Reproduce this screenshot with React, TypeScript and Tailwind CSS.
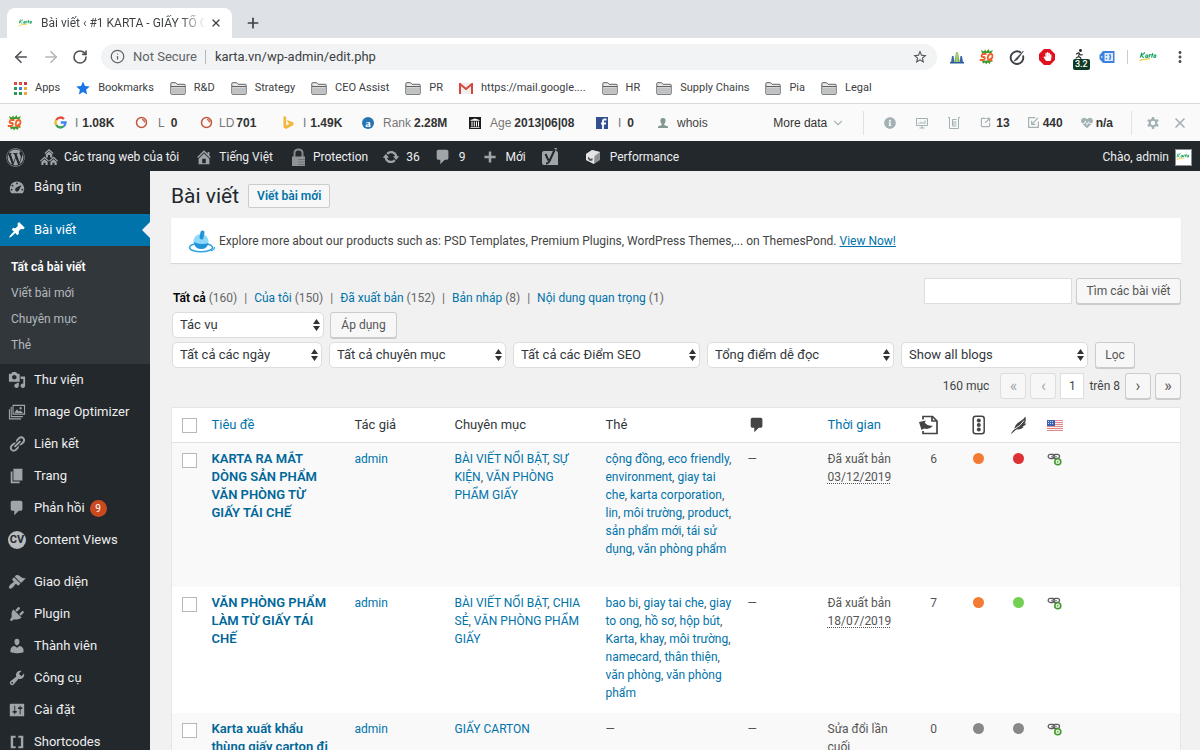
import type { ComponentProps, ReactNode } from "react";
import clsx from "clsx";
import { FaWordpress, FaInfoCircle, FaHandPaper, FaHeartbeat } from "react-icons/fa";
import { MdStarBorder, MdMoreVert } from "react-icons/md";
import {
  ArrowLeft,
  ArrowRight,
  ChevronDown,
  Info,
  Plus,
  RotateCw,
  SquareArrowOutUpRight,
  X,
} from "lucide-react";

/* 20x20 glyphs of the admin menu */
const glyphs = {
  dashboard:
    "M3.76 17h12.48c1.1-1.37 1.76-3.11 1.76-5 0-4.42-3.58-8-8-8s-8 3.58-8 8c0 1.89.66 3.63 1.76 5zM9 6a1 1 0 1 1 2 0 1 1 0 0 1-2 0zM4 8.5a1 1 0 1 1 2 0 1 1 0 0 1-2 0zM8.52 11.4c.84-.83 6.51-3.5 6.51-3.5s-2.66 5.68-3.49 6.51c-.84.84-2.18.84-3.02 0-.83-.83-.83-2.18 0-3.01zM3 13a1 1 0 1 1 2 0 1 1 0 0 1-2 0zM15 13a1 1 0 1 1 2 0 1 1 0 0 1-2 0z",
  pin: "M10.44 3.02l1.82-1.82 6.36 6.35-1.83 1.82c-1.05-.68-2.48-.57-3.41.36l-.75.75c-.92.93-1.04 2.35-.35 3.41l-1.83 1.82-2.41-2.41-2.8 2.79c-.42.42-3.38 2.71-3.8 2.29s1.86-3.39 2.28-3.81l2.79-2.79L4.1 9.36l1.83-1.82c1.05.69 2.48.57 3.4-.36l.75-.75c.93-.92 1.05-2.35.36-3.41z",
  media:
    "M13 11V4c0-.55-.45-1-1-1h-1.67L9 1H5L3.67 3H2c-.55 0-1 .45-1 1v7c0 .55.45 1 1 1h10c.55 0 1-.45 1-1zM7 4.5c1.38 0 2.5 1.12 2.5 2.5S8.38 9.5 7 9.5 4.5 8.38 4.5 7 5.62 4.5 7 4.5zM14 6h5v10.5c0 1.38-1.12 2.5-2.5 2.5S14 17.88 14 16.5s1.12-2.5 2.5-2.5c.17 0 .34.02.5.05V9h-3V6zm-4 8.05V13h2v3.5c0 1.38-1.12 2.5-2.5 2.5S7 17.88 7 16.5 8.12 14 9.5 14c.17 0 .34.02.5.05z",
  images:
    "M5 2h14v11H5zM6.2 3.2v8.6h11.6V3.2zM3 4.5h1.2v10h12.3v1.2H3zM1 7h1.2v10h12.3v1.2H1zM7 11l3-4 2 2.5 1.5-1.2L17 11zM14 4.5a1.3 1.3 0 1 1 0 2.6 1.3 1.3 0 0 1 0-2.6z",
  links:
    "M17.74 2.76c1.68 1.69 1.68 4.41 0 6.1l-1.53 1.52c-1.12 1.12-2.7 1.47-4.14 1.09l2.62-2.61.76-.77.76-.76c.84-.84.84-2.2 0-3.04-.84-.85-2.2-.85-3.04 0l-.77.76-3.38 3.38c-.37-1.44-.02-3.02 1.1-4.14l1.52-1.53c1.69-1.68 4.42-1.68 6.1 0zM8.59 13.43l5.34-5.34c.42-.42.42-1.1 0-1.52-.44-.43-1.13-.39-1.53 0l-5.33 5.34c-.42.42-.42 1.1 0 1.52.44.43 1.13.39 1.52 0zm-.76 2.29l4.14-4.15c.38 1.44.03 3.02-1.09 4.14l-1.52 1.53c-1.69 1.68-4.41 1.68-6.1 0-1.68-1.68-1.68-4.42 0-6.1l1.53-1.52c1.12-1.12 2.7-1.47 4.14-1.1l-4.14 4.15c-.85.84-.85 2.2 0 3.05.84.84 2.2.84 3.04 0z",
  page: "M6 15V2h10v13H6zm-1 1h8v2H3V5h2v11z",
  comment:
    "M5 2h9c1.1 0 2 .9 2 2v7c0 1.1-.9 2-2 2h-2l-5 5v-5H5c-1.1 0-2-.9-2-2V4c0-1.1.9-2 2-2z",
  appearance:
    "M14.48 11.06L7.41 3.99l1.5-1.5c.5-.56 2.3-.47 3.51.32 1.21.8 1.43 1.28 2.91 2.1 1.18.64 2.45 1.26 4.45.85zm-.71.71L6.7 4.7 4.93 6.47c-.39.39-.39 1.02 0 1.41l1.06 1.06c.39.39.39 1.03 0 1.42-.6.6-1.43 1.11-2.21 1.69-.35.26-.7.53-1.01.84C1.43 14.23.4 16.08 1.4 17.07c.99 1 2.84-.03 4.18-1.36.31-.31.58-.66.85-1.02.57-.78 1.08-1.61 1.69-2.21.39-.39 1.02-.39 1.41 0l1.06 1.06c.39.39 1.02.39 1.41 0z",
  plugins:
    "M13.11 4.36L9.87 7.6 8 5.73l3.24-3.24c.35-.34 1.05-.2 1.56.32.52.51.66 1.21.31 1.55zm-8 1.77l.91-1.12 9.01 9.01-1.19.84c-.71.71-2.63 1.16-3.82 1.16H6.14L4.9 17.26c-.59.59-1.54.59-2.12 0-.59-.58-.59-1.53 0-2.12l1.24-1.24v-3.88c0-1.13.4-3.19 1.09-3.89zm7.26 3.97l3.24-3.24c.34-.35 1.04-.21 1.55.31.52.51.66 1.21.31 1.55l-3.24 3.25z",
  users:
    "M10 9.25c-2.27 0-2.73-3.44-2.73-3.44C7 4.02 7.82 2 9.97 2c2.16 0 2.98 2.02 2.71 3.81 0 0-.41 3.44-2.68 3.44zm0 2.57L12.72 10c2.39 0 4.52 2.33 4.52 4.53v2.49s-3.65 1.13-7.24 1.13c-3.65 0-7.24-1.13-7.24-1.13v-2.49c0-2.25 1.94-4.48 4.47-4.48z",
  tools:
    "M16.68 9.77c-1.34 1.34-3.3 1.67-4.95.99l-5.41 6.52c-.99.99-2.59.99-3.58 0s-.99-2.59 0-3.57l6.52-5.42c-.68-1.65-.35-3.61.99-4.95 1.28-1.28 3.12-1.62 4.72-1.06l-2.89 2.89 2.82 2.82 2.86-2.87c.53 1.58.18 3.39-1.08 4.65zM3.81 16.21c.4.39 1.04.39 1.43 0 .4-.4.4-1.04 0-1.43-.39-.4-1.03-.4-1.43 0-.39.39-.39 1.03 0 1.43z",
  settings:
    "M18 16V4c0-.55-.45-1-1-1H3c-.55 0-1 .45-1 1v12c0 .55.45 1 1 1h14c.55 0 1-.45 1-1zM8 11h1c.55 0 1 .45 1 1s-.45 1-1 1H8v1.5c0 .28-.22.5-.5.5s-.5-.22-.5-.5V13H6c-.55 0-1-.45-1-1s.45-1 1-1h1V5.5c0-.28.22-.5.5-.5s.5.22.5.5V11zm5-2h-1c-.55 0-1-.45-1-1s.45-1 1-1h1V5.5c0-.28.22-.5.5-.5s.5.22.5.5V7h1c.55 0 1 .45 1 1s-.45 1-1 1h-1v5.5c0 .28-.22.5-.5.5s-.5-.22-.5-.5V9z",
  brackets: "M3 3h5.5v2.2H5.7v9.600h2.800V17H3zM17 3h-5.500v2.200h2.800v9.600h-2.800V17H17z",
  home: "M16 8.5l1.53 1.53-1.06 1.06L10 4.6l-6.47 6.49-1.06-1.06L10 2.5l4 4v-2h2v4zm-6-2.46l6 5.99V18H4v-5.97zM12 17v-5H8v5h4z",
  sites:
    "M10 1l5 4.6-.9 1L10 3 5.9 6.6l-.9-1zM10 4l3.5 3v3.5h-2.3V7.8H8.8v2.7H6.5V7zM5 9.5l5 4.6-.9 1L5 11.5.9 15.1l-.9-1zM5 12.5l3.5 3V19H6.2v-2.7H3.8V19H1.500v-3.5zM15 9.5l5 4.6-.9 1-4.1-3.6-4.1 3.6-.9-1zM15 12.5l3.5 3V19h-2.3v-2.7h-2.4V19h-2.3v-3.5z",
  update:
    "M10.2 3.28c3.53 0 6.43 2.61 6.92 6h2.08l-3.5 4-3.5-4h2.32c-.45-1.97-2.21-3.45-4.32-3.45-1.45 0-2.73.71-3.54 1.78L4.95 5.66C6.23 4.2 8.11 3.28 10.2 3.28zm-.4 13.44c-3.52 0-6.43-2.61-6.92-6H.8l3.5-4c1.17 1.33 2.33 2.67 3.5 4H5.48c.45 1.97 2.21 3.45 4.32 3.45 1.45 0 2.73-.71 3.54-1.78l1.71 1.95c-1.28 1.46-3.15 2.38-5.25 2.38z",
  plus: "M18 8.2v3.6h-6.2V18H8.2v-6.2H2V8.2h6.2V2h3.6v6.2z",
};

type GlyphName = keyof typeof glyphs;

function Glyph({ name, className }: { name: GlyphName; className?: string }) {
  return (
    <svg
      viewBox="0 0 20 20"
      fill="currentColor"
      fillRule="evenodd"
      aria-hidden="true"
      className={clsx("shrink-0", className ?? "size-[18px]")}
    >
      <path d={glyphs[name]} />
    </svg>
  );
}

function KartaLogo({ className }: { className?: string }) {
  return (
    <svg viewBox="0 0 18 14" aria-hidden="true" className={className}>
      <rect width="18" height="14" fill="#fff" />
      <path
        d="M2.500 3l-1.300 4.500M5.500 3L2.200 5.500l2 2.200M7.500 5c-1.500-.3-2 2.500-.8 2.500s1.300-2.500 1.300-2.500l-.4 2.500M9 7.500l.5-2.500 1.200-.1M12.300 3.500l-1 4M11 5h1.800M14.800 5c-1.500-.3-2 2.500-.8 2.500s1.200-2.500 1.200-2.500l-.3 2.500"
        fill="none"
        stroke="#12a05c"
        strokeWidth="1"
      />
      <path d="M.5 10.500c3-2 6.500-1.700 9.500-1.900" stroke="#ecc93c" strokeWidth="1" fill="none" />
    </svg>
  );
}

function SeoQuakeIcon() {
  return (
    <svg viewBox="0 0 16 16" aria-hidden="true" className="size-4 shrink-0">
      <path
        d="M2 1l3 1.500L6 .5l1.500 2L9.500 0l1 2.500L14 1l-1.500 3H3zM3 12l1 2.500 2-1 1 2 1.500-2L11 15l.5-2.500 2.500.5-2-2z"
        fill="#3c9a2e"
      />
      <path
        d="M7.500 5H4.300C2.500 5 2 8 3.600 8h1.200c1.800 0 1 3-.8 3H.8M11.800 5c-3 0-4.300 6-1.500 6 3.200 0 4.400-6 1.500-6zM11 9l2 3"
        fill="none"
        stroke="#f1602b"
        strokeWidth="1.800"
      />
    </svg>
  );
}

function Folder() {
  return (
    <svg viewBox="0 0 16 13" aria-hidden="true" className="h-[13px] w-4 shrink-0">
      <path
        d="M.8 11.500V1.500q0-.8.8-.8h4l1.500 1.600h7.300q.8 0 .8.800v8.400q0 .8-.8.800H1.600q-.8 0-.8-.8z"
        fill="#e9e9e9"
        stroke="#5f6163"
      />
      <path d="M2 5.500h12.300v6H2z" fill="#c0c1c2" />
      <path d="M1 4.500h14" stroke="#5f6163" />
    </svg>
  );
}

const appColors = ["#e04a3f", "#e04a3f", "#c93c3c", "#2f9a55", "#3f7de0", "#e9a93a", "#2f9a55", "#2f9a55", "#e9a93a"];

function AppsIcon() {
  return (
    <svg viewBox="0 0 13 13" aria-hidden="true" className="size-[13px] shrink-0">
      {appColors.map((c, i) => (
        <rect key={i} x={(i % 3) * 5} y={Math.floor(i / 3) * 5} width="3" height="3" fill={c} />
      ))}
    </svg>
  );
}

function GmailIcon() {
  return (
    <svg viewBox="0 0 14 11" aria-hidden="true" className="h-[11px] w-3.5 shrink-0">
      <path d="M1 0h12v11H1z" fill="#f0eeee" />
      <path d="M1 11V1l6 5 6-5v10" fill="none" stroke="#d5483d" strokeWidth="2" />
    </svg>
  );
}

const bookmarks: { label: string; icon?: ReactNode }[] = [
  { label: "Apps", icon: <AppsIcon /> },
  {
    label: "Bookmarks",
    icon: (
      <svg viewBox="0 0 24 24" aria-hidden="true" className="size-[14px] shrink-0">
        <path
          d="M12 1l3.300 7.600 8.200.8-6.200 5.500 1.800 8.100L12 18.700l-7.100 4.300 1.800-8.100L.5 9.400l8.200-.8z"
          fill="#1a73e8"
        />
      </svg>
    ),
  },
  { label: "R&D" },
  { label: "Strategy" },
  { label: "CEO Assist" },
  { label: "PR" },
  { label: "https://mail.google....", icon: <GmailIcon /> },
  { label: "HR" },
  { label: "Supply Chains" },
  { label: "Pia" },
  { label: "Legal" },
];

function BrowserChrome() {
  return (
    <header className="shrink-0 bg-[#dee1e6] text-[#3c4043]">
      <div className="flex h-[38px] items-end pl-[7px]">
        <div className="flex h-[30px] w-[225px] items-center rounded-t-lg bg-white pr-2.5 pl-[11px]">
          <KartaLogo className="h-3 w-4 shrink-0" />
          <span className="ml-[7px] min-w-0 flex-1 overflow-hidden bg-linear-to-r from-[#3c4043] from-85% to-transparent bg-clip-text text-xs whitespace-nowrap text-transparent">
            Bài viết ‹ #1 KARTA - GIẤY TỔ ONG
          </span>
          <button type="button" aria-label="Close tab" className="ml-1">
            <X className="size-3" strokeWidth={2.5} />
          </button>
        </div>
        <button type="button" aria-label="New tab" className="ml-[13px] flex h-[30px] items-center">
          <Plus className="size-4" strokeWidth={2.5} />
        </button>
      </div>

      <div className="border-b border-[#d8dadd] bg-white">
        <div className="flex h-[37px] items-center pr-[11px] pl-3">
          <button type="button" aria-label="Back">
            <ArrowLeft className="size-[18px] text-[#4d5155]" strokeWidth={2.2} />
          </button>
          <button type="button" aria-label="Forward" className="ml-3">
            <ArrowRight className="size-[18px] text-[#b4b6b9]" strokeWidth={2.2} />
          </button>
          <button type="button" aria-label="Reload" className="ml-3">
            <RotateCw className="size-4 text-[#4d5155]" strokeWidth={2.4} />
          </button>
          <div className="ml-[13px] flex h-[26px] flex-1 items-center rounded-full bg-[#f1f3f4] px-[9px] text-[13px]">
            <Info className="size-[15px] text-[#5f6368]" />
            <span className="ml-2 text-[#5f6368]">Not Secure</span>
            <span className="mr-[9px] ml-2 h-3.5 w-px bg-[#b5b8bc]" />
            <input
              aria-label="Address"
              defaultValue="karta.vn/wp-admin/edit.php"
              className="min-w-0 flex-1 bg-transparent text-[#3c4043] outline-none"
            />
            <MdStarBorder className="size-4 text-[#4d5155]" />
          </div>
          <div className="ml-3 flex items-center">
            <div className="flex items-center gap-3.5">
              <svg viewBox="0 0 16 16" aria-hidden="true" className="size-4">
                <path d="M1 13h14v1.500H1z" fill="#30589c" />
                <path d="M2 13l1-6h1.500l1 6zM10.500 13l1-6H13l1 6z" fill="#3b66ad" />
                <path d="M5.500 13L7 3h2l1.500 10z" fill="#79b63c" />
                <path d="M8 3v10" stroke="#fff" strokeWidth=".6" />
              </svg>
              <SeoQuakeIcon />
              <svg viewBox="0 0 16 16" aria-hidden="true" className="size-4" fill="none" stroke="#3e4347">
                <path d="M12 3.800A6.300 6.300 0 1 0 13.900 6.500" strokeWidth="1.900" />
                <path d="M14.500 2L7 9.500l-2 2.700 3.200-1.500z" fill="#3e4347" strokeWidth=".6" />
              </svg>
              <span className="relative flex size-4 items-center justify-center">
                <svg viewBox="0 0 16 16" aria-hidden="true" className="absolute size-4">
                  <path d="M5 0h6l5 5v6l-5 5H5l-5-5V5z" fill="#e0121f" />
                </svg>
                <FaHandPaper className="relative size-[9px] text-white" />
              </span>
            </div>
            <span className="relative ml-[18px] h-4 w-5">
              <svg viewBox="0 0 16 16" aria-hidden="true" className="size-3" fill="none" stroke="#2a2a2a" strokeWidth="1.500">
                <circle cx="10" cy="2" r="1.200" fill="#2a2a2a" />
                <path d="M4 7l3.500-2L10 8l3-.5M8.500 5l-1 5 3 2-.5 3M7.500 10l-4 2.500" />
              </svg>
              <span className="absolute top-[10px] left-0 rounded-[2px] bg-[#0d3b26] px-0.5 text-[9px] leading-[11px] font-medium text-white">
                3.2
              </span>
            </span>
            <svg viewBox="0 0 16 14" aria-hidden="true" className="ml-1.5 h-3.5 w-4">
              <path d="M4 1h11.500v12H4L.5 9V5z" fill="#3d82e0" />
              <path d="M5.500 3h8.500v8H5.500z" fill="#dfeafa" />
              <circle cx="2.800" cy="7" r=".8" fill="#fff" />
              <path d="M7.500 4.700v1.400M7.500 7.900v1.400M10.500 4.200q2 2.800 0 5.600" stroke="#3d82e0" strokeWidth="1.300" fill="none" />
            </svg>
            <span className="mr-[11px] ml-3 h-3.5 w-px bg-[#c9ccd0]" />
            <KartaLogo className="h-4 w-5" />
            <button type="button" aria-label="Menu" className="ml-3">
              <MdMoreVert className="size-[18px] text-[#4d5155]" />
            </button>
          </div>
        </div>

        <nav aria-label="Bookmarks" className="flex h-7 items-center gap-4 pb-0.5 pl-3.5 text-[11px]">
          {bookmarks.map((b) => (
            <a key={b.label} href="#" className="flex items-center gap-2 whitespace-nowrap">
              {b.icon ?? <Folder />}
              {b.label}
            </a>
          ))}
        </nav>
      </div>
    </header>
  );
}

function RingIcon() {
  return (
    <svg viewBox="0 0 13 13" aria-hidden="true" className="size-[13px] shrink-0" fill="none" stroke="#c4553c">
      <circle cx="6.500" cy="6.500" r="5" strokeWidth="1.500" />
      <path d="M7 3.500q2.500.3 2.500 3" strokeWidth="1.200" />
    </svg>
  );
}

const seoStats: { label: string; value?: string; width: string; icon: ReactNode }[] = [
  {
    label: "I",
    value: "1.08K",
    width: "w-[81px] gap-1",
    icon: (
      <svg viewBox="0 0 13 13" aria-hidden="true" className="size-[13px]" fill="none" strokeWidth="2.400">
        <path d="M2.200 4A5 5 0 0 1 10 3" stroke="#e24b3b" />
        <path d="M2.200 9A5 5 0 0 1 2.200 4" stroke="#f0b92e" />
        <path d="M10 10A5 5 0 0 1 2.200 9" stroke="#3aa35a" />
        <path d="M6.800 6.500h4.700q-.2 2.500-1.500 3.500" stroke="#4385ee" />
      </svg>
    ),
  },
  { label: "L", value: "0", width: "w-[65px] gap-1.5", icon: <RingIcon /> },
  { label: "LD", value: "701", width: "w-[82px] gap-0.5", icon: <RingIcon /> },
  {
    label: "I",
    value: "1.49K",
    width: "w-20 gap-1",
    icon: (
      <svg viewBox="0 0 13 13" aria-hidden="true" className="size-[13px]">
        <path d="M1.500 0l2.700 1v8.500l3.500-2-1.700-.8-1-2.600 6.500 2.300v2.600L4.200 13l-2.700-1.500z" fill="#f4b63f" />
      </svg>
    ),
  },
  {
    label: "Rank",
    value: "2.28M",
    width: "w-[107px] gap-[3px]",
    icon: (
      <span className="mr-0.5 flex size-3 items-center justify-center rounded-full bg-[#2674b0] font-['Liberation_Serif',serif] text-[11px] leading-3 font-bold text-white">
        a
      </span>
    ),
  },
  {
    label: "Age",
    value: "2013|06|08",
    width: "w-[127px] gap-[3px]",
    icon: (
      <svg viewBox="0 0 12 12" aria-hidden="true" className="mr-0.5 size-3">
        <path d="M0 0h12v12H0z" fill="#1c1c1c" />
        <path
          d="M1.500 3L6 1.500 10.500 3v.8h-9zM2.500 4.500h1v5h-1zM4.800 4.500h1v5h-1zM7 4.500h1v5H7zM9 4.500h1v5H9zM1.500 10h9v.8h-9z"
          fill="#fff"
        />
      </svg>
    ),
  },
  {
    label: "I",
    value: "0",
    width: "w-[61px] gap-1.5",
    icon: (
      <svg viewBox="0 0 12 12" aria-hidden="true" className="size-3">
        <path d="M0 0h12v12H0z" fill="#33508e" />
        <path d="M7 12V4q0-1.500 1.500-1.500h2M5 6.500h5" fill="none" stroke="#fff" strokeWidth="1.800" />
      </svg>
    ),
  },
  {
    label: "whois",
    width: "w-24",
    icon: (
      <svg viewBox="0 0 12 12" aria-hidden="true" className="size-3 text-[#82998f]" fill="currentColor">
        <path d="M6 1c4 0 2.500 5 1.200 6v1L11 9.500V11H1V9.500L4.800 8V7C3.500 6 2 1 6 1z" />
      </svg>
    ),
  },
];

function SeoBar() {
  return (
    <div className="flex h-[37px] shrink-0 items-center bg-[#fafafa] pr-3 pl-[7px] font-['Liberation_Sans',sans-serif] text-xs text-[#333]">
      <SeoQuakeIcon />
      <div className="ml-[31px] flex">
        {seoStats.map((s, i) => (
          <span key={i} className={clsx("flex items-center whitespace-nowrap", s.width)}>
            <span className="mr-1">{s.icon}</span>
            <span className={s.value ? "text-[#777]" : "pl-1 text-[#444]"}>{s.label}</span>
            {s.value && <b>{s.value}</b>}
          </span>
        ))}
      </div>
      <button type="button" className="ml-auto flex items-center gap-1">
        More data
        <ChevronDown className="size-3.5 text-[#a9b5b9]" />
      </button>
      <span className="ml-[18px] h-6 w-px bg-[#e2e2e2]" />
      <div className="ml-5 flex items-center gap-5 text-[#a3b1b5]">
        <FaInfoCircle className="size-3" />
        <svg viewBox="0 0 12 12" aria-hidden="true" className="size-3" fill="none" stroke="currentColor">
          <path d="M.5 1.500h11v7H.5zM6 8.500V11M3.500 11h5M3 7V5.500M5 7V4.500M7 7V5M9 7V3.500" />
        </svg>
        <svg viewBox="0 0 12 12" aria-hidden="true" className="size-3" fill="none" stroke="currentColor">
          <path d="M0 .5h1.500v11h9V.5H12M4.500 2.500h4M4.500 5h4M4.500 7h4M4.500 9h4M4.500 2.500V9" />
        </svg>
      </div>
      <div className="ml-5 flex items-center text-[#a3b1b5]">
        <SquareArrowOutUpRight className="size-[11px]" strokeWidth={2.5} />
        <b className="ml-[5px] text-[#333]">13</b>
        <svg
          viewBox="0 0 12 12"
          aria-hidden="true"
          className="ml-[18px] size-[11px]"
          fill="none"
          stroke="currentColor"
          strokeWidth="1.300"
        >
          <path d="M8 .7H.7v10.600h10.600V5M11 1L4 8M4 4v4h4" />
        </svg>
        <b className="ml-1 text-[#333]">440</b>
        <FaHeartbeat className="ml-[18px] size-3" />
        <b className="ml-[3px] text-[#333]">n/a</b>
      </div>
      <span className="ml-[18px] h-6 w-px bg-[#e2e2e2]" />
      <button type="button" aria-label="Settings" className="ml-3.5">
        <svg viewBox="0 0 14 14" aria-hidden="true" className="size-3.5" fill="none" stroke="#a3b1b5">
          <circle cx="7" cy="7" r="3.300" strokeWidth="2.200" />
          <path
            d="M7 1v2.400M7 10.600V13M1.800 4l2.100 1.200M10.100 8.800l2.100 1.200M1.800 10l2.100-1.200M10.100 5.200L12.200 4"
            strokeWidth="2.400"
          />
        </svg>
      </button>
      <button type="button" aria-label="Close" className="ml-3">
        <X className="size-4 text-[#a3b1b5]" strokeWidth={2.5} />
      </button>
    </div>
  );
}

function AdminBar() {
  return (
    <nav
      aria-label="Toolbar"
      className="flex h-[30px] shrink-0 items-center bg-[#23282d] pt-0.5 pr-2 pl-1.5 text-xs whitespace-nowrap text-[#eee] [&_svg]:text-[#a0a5aa]"
    >
      <a href="#" aria-label="WordPress">
        <FaWordpress className="size-[19px]" />
      </a>
      <a href="#" className="ml-[15px] flex items-center gap-1.5">
        <Glyph name="sites" />
        Các trang web của tôi
      </a>
      <a href="#" className="ml-4 flex items-center gap-1.5">
        <Glyph name="home" />
        Tiếng Việt
      </a>
      <a href="#" className="ml-[18px] flex items-center gap-[7px]">
        <svg viewBox="0 0 15 18" aria-hidden="true" className="h-[18px] w-[15px]">
          <path d="M3.500 9V5q0-3.500 4-3.500t4 3.500v4" fill="none" stroke="#85898c" strokeWidth="2" />
          <path d="M1 8.500h13V18H1z" fill="#909497" />
          <path d="M7 11.500h7M7 14h7M7 16.500h7" stroke="#6f7376" />
        </svg>
        Protection
      </a>
      <a href="#" className="ml-3.5 flex items-center gap-1.5">
        <Glyph name="update" />
        36
      </a>
      <a href="#" className="ml-3.5 flex items-center gap-[7px]">
        <Glyph name="comment" />
        9
      </a>
      <a href="#" className="ml-[18px] flex items-center gap-2">
        <Glyph name="plus" className="size-3.5" />
        Mới
      </a>
      <a href="#" aria-label="Yoast SEO" className="ml-[15px]">
        <svg viewBox="0 0 18 18" aria-hidden="true" className="size-[18px]">
          <path d="M3 3h9l1.500-3h2.500l-1 3q2 0 2 2v12H3q-2 0-2-2V5q0-2 2-2z" fill="#a0a5aa" />
          <path d="M4.500 6l3 6.500M14 1L8.500 13q-1 2.500-3.500 2.500" fill="none" stroke="#23282d" strokeWidth="2" />
        </svg>
      </a>
      <a href="#" className="ml-[26px] flex items-center gap-[9px]">
        <svg viewBox="0 0 16 16" aria-hidden="true" className="size-4">
          <path d="M1 5l6-4 8 2v8l-6 4-8-4z" fill="#8e9294" />
          <path d="M1 5l8.500 2L9 15l-8-4zM7 1l8 2-5.500 4L1 5z" fill="#e4e4e4" />
          <path d="M3 7.500l2.500 2.500 2-1v2.500L5 12 3 10z" fill="#555" />
        </svg>
        Performance
      </a>
      <a href="#" className="ml-auto flex items-center gap-1.5">
        Chào, admin
        <span className="flex size-[17px] items-center border border-[#8c8f94] bg-white">
          <KartaLogo className="w-full" />
        </span>
      </a>
    </nav>
  );
}

const subMenu = ["Tất cả bài viết", "Viết bài mới", "Chuyên mục", "Thẻ"];

type MenuEntry = { label: string; icon: GlyphName | "cv"; count?: number };

const menuTop: MenuEntry[] = [
  { label: "Thư viện", icon: "media" },
  { label: "Image Optimizer", icon: "images" },
  { label: "Liên kết", icon: "links" },
  { label: "Trang", icon: "page" },
  { label: "Phản hồi", icon: "comment", count: 9 },
  { label: "Content Views", icon: "cv" },
];

const menuBottom: MenuEntry[] = [
  { label: "Giao diện", icon: "appearance" },
  { label: "Plugin", icon: "plugins" },
  { label: "Thành viên", icon: "users" },
  { label: "Công cụ", icon: "tools" },
  { label: "Cài đặt", icon: "settings" },
  { label: "Shortcodes", icon: "brackets" },
];

function MenuItem({ label, icon, count }: MenuEntry) {
  return (
    <a href="#" className="flex h-8 items-center pl-2 whitespace-nowrap">
      {icon === "cv" ? (
        <span className="flex size-[18px] items-center justify-center rounded-full bg-[#b9bcbe] text-[11px] font-bold text-[#23282d]">
          CV
        </span>
      ) : (
        <span className="text-[#a0a5aa]">
          <Glyph name={icon} />
        </span>
      )}
      <span className="ml-2">{label}</span>
      {count && (
        <span className="ml-[5px] flex size-[17px] items-center justify-center rounded-full bg-[#ca4a1f] text-[10px] text-white">
          {count}
        </span>
      )}
    </a>
  );
}

function Sidebar() {
  return (
    <nav
      aria-label="Main menu"
      className="w-[150px] shrink-0 overflow-hidden bg-[#23282d] text-[13px] text-[#eee]"
    >
      <MenuItem label="Bảng tin" icon="dashboard" />
      <a
        href="#"
        className="relative mt-[11px] flex h-8 items-center bg-[#0073aa] pl-2 text-white after:absolute after:right-0 after:border-8 after:border-l-0 after:border-transparent after:border-r-[#f1f1f1]"
      >
        <Glyph name="pin" />
        <span className="ml-2">Bài viết</span>
      </a>
      <div className="bg-[#32373c] pt-2 pb-1.5 text-xs">
        {subMenu.map((label, i) => (
          <a
            key={label}
            href="#"
            className={clsx(
              "flex h-[26px] items-center pl-[11px]",
              i === 0 ? "font-semibold text-white" : "text-[#b4b9be]",
            )}
          >
            {label}
          </a>
        ))}
      </div>
      {menuTop.map((m) => (
        <MenuItem key={m.label} {...m} />
      ))}
      <div className="mt-2.5">
        {menuBottom.map((m) => (
          <MenuItem key={m.label} {...m} />
        ))}
      </div>
    </nav>
  );
}

function Button({ children, className, ...rest }: ComponentProps<"button">) {
  return (
    <button
      type="button"
      className={clsx(
        "flex h-[26px] items-center justify-center rounded-[3px] border border-[#ccc] bg-[#f7f7f7] whitespace-nowrap text-[#555] shadow-[0_1px_0_#ccc] disabled:border-[#ddd] disabled:text-[#a0a5aa] disabled:shadow-none",
        className,
      )}
      {...rest}
    >
      {children}
    </button>
  );
}

function Select({ label, value, className }: { label: string; value: string; className: string }) {
  return (
    <label className={clsx("relative flex items-center", className)}>
      <span className="sr-only">{label}</span>
      <select className="h-[26px] w-full appearance-none rounded-[5px] border border-[#ddd] bg-white pl-[7px] text-[13px] text-[#32373c] outline-none">
        <option>{value}</option>
      </select>
      <svg
        viewBox="0 0 7 12"
        aria-hidden="true"
        className="pointer-events-none absolute right-1 h-3 w-[7px] text-[#333]"
        fill="currentColor"
      >
        <path d="M3.500 0L7 5H0zM3.500 12L0 7h7z" />
      </svg>
    </label>
  );
}

const views: [string, number][] = [
  ["Tất cả", 160],
  ["Của tôi", 150],
  ["Đã xuất bản", 152],
  ["Bản nháp", 8],
  ["Nội dung quan trọng", 1],
];

const filters = [
  { label: "Ngày", value: "Tất cả các ngày", width: "w-[150px]" },
  { label: "Chuyên mục", value: "Tất cả chuyên mục", width: "w-[177px]" },
  { label: "Điểm SEO", value: "Tất cả các Điểm SEO", width: "w-[187px]" },
  { label: "Điểm dễ đọc", value: "Tổng điểm dễ đọc", width: "w-[187px]" },
  { label: "Blogs", value: "Show all blogs", width: "w-[187px]" },
];

const posts = [
  {
    title: "KARTA RA MẮT DÒNG SẢN PHẨM VĂN PHÒNG TỪ GIẤY TÁI CHẾ",
    categories: ["BÀI VIẾT NỔI BẬT", "SỰ KIỆN", "VĂN PHÒNG PHẨM GIẤY"],
    tags: [
      "cộng đồng",
      "eco friendly",
      "environment",
      "giay tai che",
      "karta corporation",
      "lin",
      "môi trường",
      "product",
      "sản phẩm mới",
      "tái sử dụng",
      "văn phòng phẩm",
    ],
    status: "Đã xuất bản",
    date: "03/12/2019",
    links: 6,
    seo: "bg-[#f37c35]",
    readability: "bg-[#dc3235]",
    row: "h-36 bg-[#f9f9f9]",
  },
  {
    title: "VĂN PHÒNG PHẨM LÀM TỪ GIẤY TÁI CHẾ",
    categories: ["BÀI VIẾT NỔI BẬT", "CHIA SẺ", "VĂN PHÒNG PHẨM GIẤY"],
    tags: [
      "bao bi",
      "giay tai che",
      "giay to ong",
      "hồ sơ",
      "hộp bút",
      "Karta",
      "khay",
      "môi trường",
      "namecard",
      "thân thiện",
      "văn phòng",
      "văn phòng phẩm",
    ],
    status: "Đã xuất bản",
    date: "18/07/2019",
    links: 7,
    seo: "bg-[#f37c35]",
    readability: "bg-[#74d053]",
    row: "h-[126px] bg-white",
  },
  {
    title: "Karta xuất khẩu thùng giấy carton đi",
    categories: ["GIẤY CARTON"],
    tags: [],
    status: "Sửa đổi lần cuối",
    date: "",
    links: 0,
    seo: "bg-[#888]",
    readability: "bg-[#888]",
    row: "h-36 bg-[#f9f9f9]",
  },
];

function TermLinks({ terms }: { terms: string[] }) {
  if (terms.length === 0) return <>—</>;
  return (
    <>
      {terms.map((t, i) => (
        <span key={t}>
          {i > 0 && ", "}
          <a href="#" className="text-[#0073aa]">
            {t}
          </a>
        </span>
      ))}
    </>
  );
}

function Checkbox({ label }: { label: string }) {
  return (
    <input
      type="checkbox"
      aria-label={label}
      className="block size-[15px] appearance-none border border-[#b4b9be] bg-white"
    />
  );
}

function ChainAddIcon() {
  return (
    <svg viewBox="0 0 15 13" aria-hidden="true" className="mt-[3px] h-[13px] w-[15px]" fill="none">
      <rect x="1.200" y="1.300" width="6.500" height="4.200" rx="2.100" stroke="#5c5c5c" strokeWidth="1.300" />
      <rect x="6" y="1.300" width="6.500" height="4.200" rx="2.100" stroke="#5c5c5c" strokeWidth="1.300" />
      <path d="M4 3.400h6" stroke="#888" />
      <circle cx="10.800" cy="8.800" r="3" fill="#fff" stroke="#3f9a2d" strokeWidth="1.600" />
      <path d="M10.800 7.300v3M9.300 8.800h3" stroke="#7cc56a" />
    </svg>
  );
}

function UsFlag() {
  return (
    <svg viewBox="0 0 16 11" role="img" aria-label="English" className="h-[11px] w-4">
      <path d="M0 0h16v11H0z" fill="#f7eeee" />
      <path d="M0 .5h16M0 2.500h16M0 4.500h16M0 6.500h16M0 8.500h16M0 10.500h16" stroke="#e08a8e" />
      <path d="M0 0h8v6H0z" fill="#3c62b4" />
      <path d="M1 1.500h6M1 3.500h6" stroke="#cfdcf5" strokeDasharray="1 1" />
    </svg>
  );
}

function PostsTable() {
  return (
    <table className="mt-2 w-full table-fixed border border-[#e5e5e5] bg-white text-left leading-[18px] text-[#555] [&_td]:p-0 [&_td]:pt-[7px] [&_td]:pl-2 [&_td]:align-top [&_th]:pl-2">
      <colgroup>
        <col className="w-8" />
        <col className="w-[143px]" />
        <col className="w-[100px]" />
        <col className="w-[151px]" />
        <col className="w-[142px]" />
        <col className="w-20" />
        <col className="w-[91px]" />
        <col className="w-[46px]" />
        <col className="w-[42px]" />
        <col className="w-10" />
        <col />
      </colgroup>
      <thead className="text-[13px] text-[#32373c] [&_th]:font-normal">
        <tr className="h-[35px] border-b border-[#e1e1e1]">
          <th>
            <div className="pl-0.5">
              <Checkbox label="Chọn toàn bộ" />
            </div>
          </th>
          <th>
            <a href="#" className="text-[#0073aa]">
              Tiêu đề
            </a>
          </th>
          <th>Tác giả</th>
          <th>Chuyên mục</th>
          <th>Thẻ</th>
          <th>
            <span className="text-[#444]">
              <Glyph name="comment" />
            </span>
          </th>
          <th>
            <a href="#" className="text-[#0073aa]">
              Thời gian
            </a>
          </th>
          <th>
            <svg viewBox="0 0 20 20" aria-hidden="true" className="size-5" fill="none" stroke="#444" strokeWidth="1.700">
              <path d="M4 4.500V1.500h9.500L18 6v12.500H4V16M13 1.500V6h5" />
              <path d="M0 7l7-1.500-1.300 2q3 4 8.300 3.200-3.500 4.300-9 2.800l-2.500 1.500z" fill="#444" stroke="none" />
            </svg>
          </th>
          <th>
            <svg
              viewBox="0 0 14 20"
              aria-hidden="true"
              className="ml-[7px] h-5 w-3.5"
              fill="none"
              stroke="#444"
              strokeWidth="1.500"
            >
              <rect x="1.200" y="1.200" width="11" height="17.500" rx="2.500" />
              <g fill="#444" stroke="none">
                <circle cx="6.800" cy="5.500" r="2" />
                <circle cx="6.800" cy="10" r="2" />
                <circle cx="6.800" cy="14.500" r="2" />
              </g>
            </svg>
          </th>
          <th>
            <svg viewBox="0 0 20 20" aria-hidden="true" className="ml-[3px] size-[18px]">
              <path
                d="M1 19.500q2-3 4-5 0-5 6-8.500 4.500-2.500 6-5.500 1.500 5-1 8l2-.5q-.5 3-4 4l1 .5q-3 3-8 2.500L2 19.500z"
                fill="#444"
              />
              <path d="M5 14.500Q12 11 15.500 5" fill="none" stroke="#fff" strokeWidth="1" />
            </svg>
          </th>
          <th>
            <UsFlag />
          </th>
        </tr>
      </thead>
      <tbody>
        {posts.map((p) => (
          <tr key={p.title} className={p.row}>
            <td>
              <div className="pt-[3px] pl-0.5">
                <Checkbox label={`Chọn ${p.title}`} />
              </div>
            </td>
            <td>
              <a href="#" className="block pr-3 text-[13px] font-semibold text-[#006799]">
                {p.title}
              </a>
            </td>
            <td>
              <a href="#" className="text-[#0073aa]">
                admin
              </a>
            </td>
            <td>
              <div className="pr-3">
                <TermLinks terms={p.categories} />
              </div>
            </td>
            <td>
              <TermLinks terms={p.tags} />
            </td>
            <td>—</td>
            <td>
              {p.status}
              <br />
              {p.date && (
                <abbr title={p.date} className="underline decoration-dotted underline-offset-2">
                  {p.date}
                </abbr>
              )}
            </td>
            <td>
              <div className="pr-2 text-center">{p.links}</div>
            </td>
            <td>
              <span className={clsx("mt-[3px] ml-2 block size-[11px] rounded-full", p.seo)} />
            </td>
            <td>
              <span className={clsx("mt-[3px] ml-1.5 block size-[11px] rounded-full", p.readability)} />
            </td>
            <td>
              <a href="#" aria-label="Add translation">
                <ChainAddIcon />
              </a>
            </td>
          </tr>
        ))}
      </tbody>
    </table>
  );
}

function PostsPage() {
  return (
    <main className="min-w-0 flex-1 overflow-hidden bg-[#f1f1f1] pt-[13px] pr-[19px] pl-[21px] text-xs text-[#444]">
      <div className="flex h-6 items-center gap-[9px]">
        <h1 className="text-[21px] leading-6 text-[#23282d]">Bài viết</h1>
        <a
          href="#"
          className="flex h-6 items-center rounded-[2px] border border-[#ccc] bg-[#f7f7f7] px-2 font-semibold text-[#0073aa]"
        >
          Viết bài mới
        </a>
      </div>

      <div className="mt-2.5 flex h-[45px] items-center bg-white pl-4 shadow-[0_1px_1px_rgba(0,0,0,.1)]">
        <svg viewBox="0 0 28 24" aria-hidden="true" className="h-6 w-7" fill="none">
          <ellipse cx="14" cy="18.500" rx="11.500" ry="4.300" stroke="#2fa3e0" strokeWidth="1.500" />
          <ellipse cx="14" cy="18" rx="8.500" ry="3" fill="#fff" />
          <circle cx="14" cy="12.500" r="7.500" fill="#8fd8fa" />
          <path d="M6.700 13q7 3.500 14.600 1-1 6-7.300 6t-7.300-7z" fill="#2293d8" />
          <path d="M14.500 8.500l1-5" stroke="#2293d8" strokeWidth="4" strokeLinecap="round" />
          <path d="M24 22q3.500-1 3.500-4" stroke="#2fa3e0" strokeWidth="1.300" />
        </svg>
        <p className="ml-1">
          Explore more about our products such as: PSD Templates, Premium Plugins, WordPress Themes,... on
          ThemesPond.{" "}
          <a href="#" className="text-[#0073aa] underline">
            View Now!
          </a>
        </p>
      </div>

      <div className="mt-[15px] flex h-[26px] items-end gap-1">
        <ul className="flex pl-0.5 leading-3 text-[#666]">
          {views.map(([label, count], i) => (
            <li key={label}>
              {i > 0 && <span className="mx-[7px]">|</span>}
              <a href="#" className={i === 0 ? "font-semibold text-black" : "text-[#0073aa]"}>
                {label}
              </a>{" "}
              ({count})
            </li>
          ))}
        </ul>
        <input
          type="search"
          aria-label="Tìm các bài viết"
          className="ml-auto h-[26px] w-[148px] border border-[#ddd] bg-white px-1 outline-none"
        />
        <Button className="w-[105px]">Tìm các bài viết</Button>
      </div>

      <div className="mt-2 flex gap-1.5 pl-px">
        <Select label="Lựa chọn thao tác" value="Tác vụ" className="w-[152px]" />
        <Button className="w-[67px]">Áp dụng</Button>
      </div>

      <div className="mt-1 flex gap-[7px] pl-px">
        {filters.map((f) => (
          <Select key={f.label} label={f.label} value={f.value} className={f.width} />
        ))}
        <Button className="w-10">Lọc</Button>
      </div>

      <div className="mt-[5px] flex items-center justify-end gap-1">
        <span className="mr-[7px]">160 mục</span>
        <Button disabled aria-label="Trang đầu" className="w-[26px] text-base">
          «
        </Button>
        <Button disabled aria-label="Trang trước" className="w-[26px] text-base">
          ‹
        </Button>
        <input
          aria-label="Trang hiện tại"
          defaultValue="1"
          className="h-[26px] w-6 border border-[#ddd] bg-white text-center outline-none"
        />
        <span className="mx-px">trên 8</span>
        <Button aria-label="Trang sau" className="w-[26px] text-base">
          ›
        </Button>
        <Button aria-label="Trang cuối" className="w-[26px] text-base">
          »
        </Button>
      </div>

      <PostsTable />
    </main>
  );
}

export default function App() {
  return (
    <div className="flex h-screen flex-col overflow-hidden font-[Roboto,sans-serif]">
      <BrowserChrome />
      <SeoBar />
      <AdminBar />
      <div className="flex min-h-0 flex-1">
        <Sidebar />
        <PostsPage />
      </div>
    </div>
  );
}
